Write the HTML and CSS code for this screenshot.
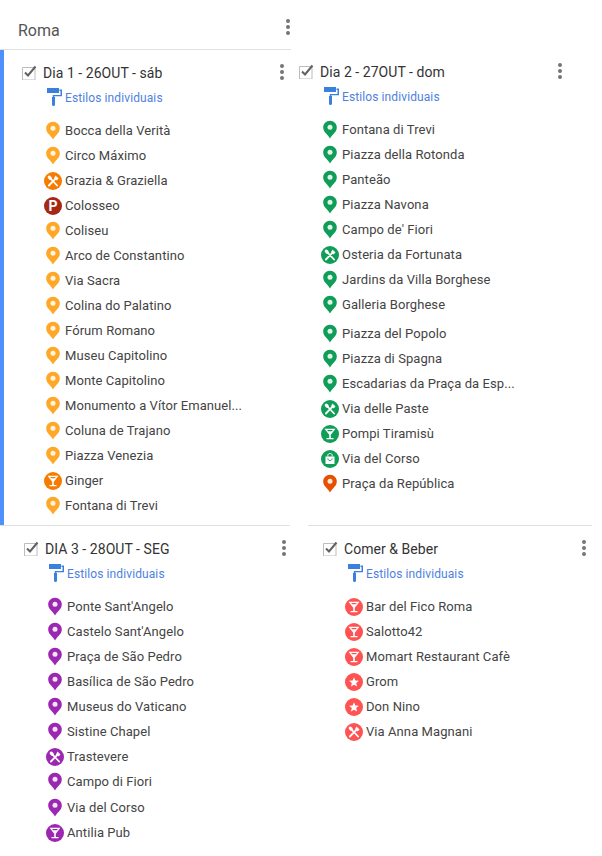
FILE: index.html
```html
<!DOCTYPE html>
<html>
<head>
    <meta charset="UTF-8">
    <meta name="viewport" content="width=device-width, initial-scale=1">
    <title>Roma</title>
    <link rel="stylesheet" href="styles.css">
</head>

<body>
    <!-- Shared icons -->
    <svg class="icon-defs" aria-hidden="true">
        <symbol id="pin" viewBox="0 0 18 20">
            <path fill="currentColor" d="M9 .7C5.100.7 2.200 3.700 2.200 7.400c0 2.700 1.400 4.400 2.900 6.100 1.500 1.600 3 3.300 3.900 5 .9-1.700 2.400-3.400 3.900-5 1.500-1.700 2.900-3.400 2.900-6.100C15.800 3.700 12.900.7 9 .7z"/>
            <circle cx="9" cy="7.200" r="2.500" fill="#fff" fill-opacity="0.88"/>
        </symbol>
        <symbol id="food" viewBox="0 0 18 18">
            <circle cx="9" cy="9" r="9" fill="currentColor"/>
            <path fill="none" stroke="#fff" stroke-width="1.800" stroke-linecap="round" d="M4.900 13.500l7.400-7.600M13.100 13.500L6.500 6.500"/>
            <ellipse cx="5.800" cy="5.800" rx="1.700" ry="2.500" fill="#fff" transform="rotate(-45 5.800 5.800)"/>
            <path fill="#fff" d="M11.800 3.500l.9.900-.6 1 .5.500 1-.6.900.9-1.500 2-1.300-.1-1.300-1.300-.1-1.300z"/>
        </symbol>
        <symbol id="drink" viewBox="0 0 18 18">
            <circle cx="9" cy="9" r="9" fill="currentColor"/>
            <path fill="#fff" fill-rule="evenodd" d="M3.500 3.800h11L9.800 9.700v3.300h2.700v1.300h-7V13h2.700V9.700zM6.200 5.100l.9 1.100h3.800l.9-1.100z"/>
        </symbol>
        <symbol id="star" viewBox="0 0 18 18">
            <circle cx="9" cy="9" r="9" fill="currentColor"/>
            <path fill="#fff" d="M9 4.300l1.400 3.200 3.500.3-2.700 2.300.8 3.400-3-1.800-3 1.800.8-3.400-2.700-2.300 3.500-.3z"/>
        </symbol>
        <symbol id="bag" viewBox="0 0 18 18">
            <circle cx="9" cy="9" r="9" fill="currentColor"/>
            <path fill="#fff" d="M4.500 6.500h9v7.500h-9z"/>
            <path fill="none" stroke="#fff" stroke-width="1" d="M6.800 6.500V5.400C6.800 4.200 7.800 3.500 9 3.500s2.200.7 2.200 1.900v1.100"/>
            <path fill="none" stroke="currentColor" stroke-width="1" d="M6.800 8.500c.4 1.500 1.200 2.100 2.200 2.100s1.800-.6 2.200-2.100"/>
        </symbol>
        <symbol id="parking" viewBox="0 0 18 18">
            <circle cx="9" cy="9" r="9" fill="currentColor"/>
            <text x="9" y="14" text-anchor="middle" class="parking-letter">P</text>
        </symbol>
        <symbol id="roller" viewBox="0 0 18 24">
            <path fill="currentColor" d="M3 3h12v5H3zM15.500 4.500H18v6.800h-7.700v1.400H8.800V10h7.700V6h-1z"/>
            <path fill="currentColor" d="M8 12h3v7.500a1.500 1.500 0 0 1-3 0z"/>
        </symbol>
        <symbol id="check" viewBox="0 0 15 15">
            <path fill="none" stroke="#bdbdbd" d="M.5 2.500h12.500V15H.5z"/>
            <path fill="none" stroke="#616161" stroke-width="2" d="M3 7.500l3 3L13.500 1.500"/>
        </symbol>
    </svg>

    <div class="layers">
        <header class="map-title">
            <h1>Roma</h1>
            <span class="kebab"><i></i><i></i><i></i></span>
        </header>
        <div class="top-spacer"></div>

        <section class="layer layer-active">
            <div class="layer-head">
                <svg class="checkbox"><use href="#check"/></svg>
                <h2>Dia 1 - 26OUT - sáb</h2>
                <span class="kebab"><i></i><i></i><i></i></span>
            </div>
            <div class="style-link">
                <svg class="roller"><use href="#roller"/></svg>
                <span>Estilos individuais</span>
            </div>
            <ul class="places yellow">
                <li><svg class="pin"><use href="#pin"/></svg>Bocca della Verità</li>
                <li><svg class="pin"><use href="#pin"/></svg>Circo Máximo</li>
                <li><svg class="round orange"><use href="#food"/></svg>Grazia &amp; Graziella</li>
                <li><svg class="round brick"><use href="#parking"/></svg>Colosseo</li>
                <li><svg class="pin"><use href="#pin"/></svg>Coliseu</li>
                <li><svg class="pin"><use href="#pin"/></svg>Arco de Constantino</li>
                <li><svg class="pin"><use href="#pin"/></svg>Via Sacra</li>
                <li><svg class="pin"><use href="#pin"/></svg>Colina do Palatino</li>
                <li><svg class="pin"><use href="#pin"/></svg>Fórum Romano</li>
                <li><svg class="pin"><use href="#pin"/></svg>Museu Capitolino</li>
                <li><svg class="pin"><use href="#pin"/></svg>Monte Capitolino</li>
                <li><svg class="pin"><use href="#pin"/></svg>Monumento a Vítor Emanuel...</li>
                <li><svg class="pin"><use href="#pin"/></svg>Coluna de Trajano</li>
                <li><svg class="pin"><use href="#pin"/></svg>Piazza Venezia</li>
                <li><svg class="round orange"><use href="#drink"/></svg>Ginger</li>
                <li><svg class="pin"><use href="#pin"/></svg>Fontana di Trevi</li>
            </ul>
        </section>

        <section class="layer layer-two">
            <div class="layer-head">
                <svg class="checkbox"><use href="#check"/></svg>
                <h2>Dia 2 - 27OUT - dom</h2>
                <span class="kebab"><i></i><i></i><i></i></span>
            </div>
            <div class="style-link">
                <svg class="roller"><use href="#roller"/></svg>
                <span>Estilos individuais</span>
            </div>
            <ul class="places green">
                <li><svg class="pin"><use href="#pin"/></svg>Fontana di Trevi</li>
                <li><svg class="pin"><use href="#pin"/></svg>Piazza della Rotonda</li>
                <li><svg class="pin"><use href="#pin"/></svg>Panteão</li>
                <li><svg class="pin"><use href="#pin"/></svg>Piazza Navona</li>
                <li><svg class="pin"><use href="#pin"/></svg>Campo de' Fiori</li>
                <li><svg class="round"><use href="#food"/></svg>Osteria da Fortunata</li>
                <li><svg class="pin"><use href="#pin"/></svg>Jardins da Villa Borghese</li>
                <li><svg class="pin"><use href="#pin"/></svg>Galleria Borghese</li>
                <li class="wide-gap"><svg class="pin"><use href="#pin"/></svg>Piazza del Popolo</li>
                <li><svg class="pin"><use href="#pin"/></svg>Piazza di Spagna</li>
                <li><svg class="pin"><use href="#pin"/></svg>Escadarias da Praça da Esp...</li>
                <li><svg class="round"><use href="#food"/></svg>Via delle Paste</li>
                <li><svg class="round"><use href="#drink"/></svg>Pompi Tiramisù</li>
                <li><svg class="round"><use href="#bag"/></svg>Via del Corso</li>
                <li><svg class="pin dark-orange"><use href="#pin"/></svg>Praça da República</li>
            </ul>
        </section>

        <section class="layer layer-three">
            <div class="layer-head">
                <svg class="checkbox"><use href="#check"/></svg>
                <h2>DIA 3 - 28OUT - SEG</h2>
                <span class="kebab"><i></i><i></i><i></i></span>
            </div>
            <div class="style-link">
                <svg class="roller"><use href="#roller"/></svg>
                <span>Estilos individuais</span>
            </div>
            <ul class="places purple">
                <li><svg class="pin"><use href="#pin"/></svg>Ponte Sant'Angelo</li>
                <li><svg class="pin"><use href="#pin"/></svg>Castelo Sant'Angelo</li>
                <li><svg class="pin"><use href="#pin"/></svg>Praça de São Pedro</li>
                <li><svg class="pin"><use href="#pin"/></svg>Basílica de São Pedro</li>
                <li><svg class="pin"><use href="#pin"/></svg>Museus do Vaticano</li>
                <li><svg class="pin"><use href="#pin"/></svg>Sistine Chapel</li>
                <li><svg class="round"><use href="#food"/></svg>Trastevere</li>
                <li><svg class="pin"><use href="#pin"/></svg>Campo di Fiori</li>
                <li class="small-gap"><svg class="pin"><use href="#pin"/></svg>Via del Corso</li>
                <li><svg class="round"><use href="#drink"/></svg>Antilia Pub</li>
            </ul>
        </section>

        <section class="layer layer-four">
            <div class="layer-head">
                <svg class="checkbox"><use href="#check"/></svg>
                <h2>Comer &amp; Beber</h2>
                <span class="kebab"><i></i><i></i><i></i></span>
            </div>
            <div class="style-link">
                <svg class="roller"><use href="#roller"/></svg>
                <span>Estilos individuais</span>
            </div>
            <ul class="places red">
                <li><svg class="round"><use href="#drink"/></svg>Bar del Fico Roma</li>
                <li><svg class="round"><use href="#drink"/></svg>Salotto42</li>
                <li><svg class="round"><use href="#drink"/></svg>Momart Restaurant Cafè</li>
                <li><svg class="round"><use href="#star"/></svg>Grom</li>
                <li><svg class="round"><use href="#star"/></svg>Don Nino</li>
                <li><svg class="round"><use href="#food"/></svg>Via Anna Magnani</li>
            </ul>
        </section>
    </div>
</body>
</html>
```

FILE: styles.css
```css
body {
    margin: 0;
    background: white;
    color: #444;
    font-family: Roboto, "Liberation Sans", sans-serif;
}

.icon-defs {
    display: none;
}

.layers {
    display: grid;
    grid-template-columns: 291px 301px;
    grid-template-rows: 50px 475px auto;
}

/* Title bar */
.map-title {
    display: flex;
    align-items: center;
    justify-content: space-between;
    padding: 11px 1px 0 18px;
    border-bottom: 1px solid #e0e0e0;
    box-sizing: border-box;
    height: 50px;
}

.map-title h1 {
    margin: 0;
    font-size: 16px;
    font-weight: 400;
    color: #555;
}

.map-title .kebab {
    margin-bottom: 6px;
}

.kebab {
    display: flex;
    flex-direction: column;
    gap: 2px;
    flex: none;
}

.kebab i {
    display: block;
    width: 4px;
    height: 4px;
    border-radius: 50%;
    background: #757575;
}

/* Layers */
.layer {
    box-sizing: border-box;
    padding-top: 10px;
}

.layer-active {
    border-left: 4px solid #4d90fe;
    padding: 10px 7px 0 18px;
}

.layer-two {
    padding: 9px 30px 0 8px;
}

.layer-three {
    border-top: 1px solid #e0e0e0;
    margin-right: 1px;
    padding: 10px 4px 0 24px;
}

.layer-four {
    border-top: 1px solid #e0e0e0;
    margin-left: 17px;
    padding: 10px 6px 0 15px;
}

.layer-head {
    display: flex;
    align-items: center;
    gap: 8px;
    height: 24px;
    margin-bottom: 1px;
}

.layer-head h2 {
    flex: 1;
    margin: 0;
    padding-top: 2px;
    font-size: 14px;
    font-weight: 400;
    letter-spacing: 0.05px;
    color: #333;
}

.checkbox {
    width: 15px;
    height: 15px;
    margin-right: -2px;
    flex: none;
}

.style-link {
    display: flex;
    align-items: center;
    gap: 3px;
    height: 24px;
    padding-left: 22px;
    margin-bottom: 9px;
    font-size: 12px;
    letter-spacing: 0.1px;
    color: #4f7fe0;
}

.style-link span {
    padding-top: 2px;
}

.roller {
    width: 18px;
    height: 24px;
    color: #3b80dd;
    flex: none;
}

/* Places */
.places {
    margin: 0;
    padding: 0 0 0 22px;
    list-style: none;
    font-size: 13px;
    letter-spacing: 0.08px;
}

.places li {
    display: flex;
    align-items: center;
    gap: 3px;
    height: 25px;
    white-space: nowrap;
    color: #444;
}

.places li.wide-gap {
    margin-top: 4px;
}

.places li.small-gap {
    margin-top: 1px;
}

.pin {
    width: 18px;
    height: 20px;
    flex: none;
}

.round {
    width: 18px;
    height: 18px;
    flex: none;
}

.parking-letter {
    font-family: Roboto, sans-serif;
    font-size: 14px;
    font-weight: 700;
    fill: white;
}

.yellow svg { color: #ffa726; }
.green svg { color: #0f9d58; }
.purple svg { color: #9c27b0; }
.red svg { color: #ff5252; }

.places svg.orange { color: #f57c00; }
.places svg.brick { color: #a52714; }
.places svg.dark-orange { color: #e65100; }
```
